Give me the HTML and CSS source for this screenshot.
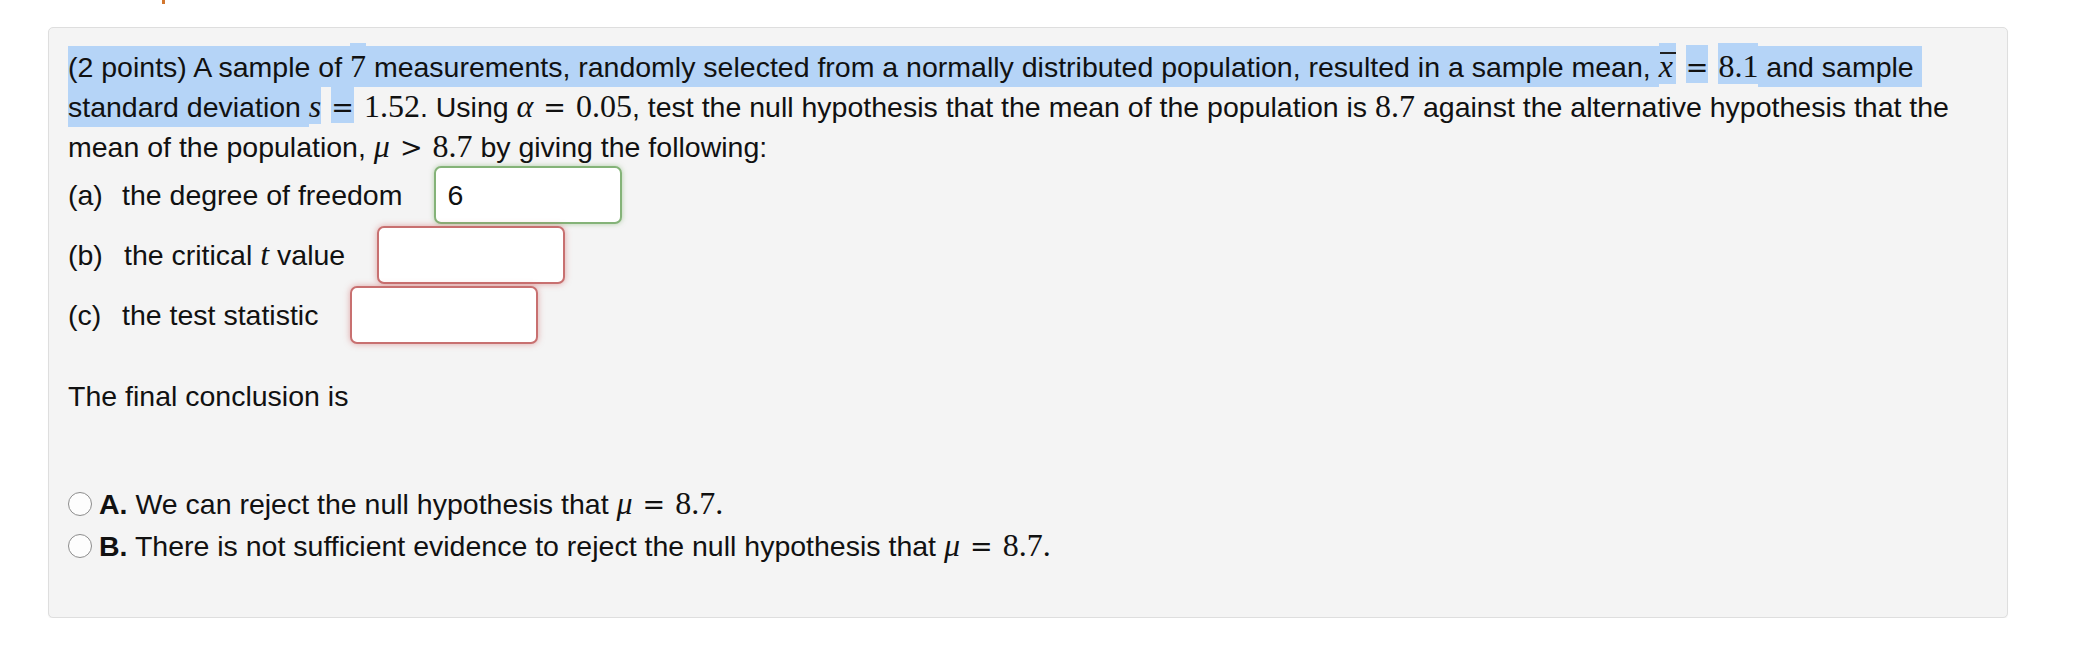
FILE: index.html
```html
<!DOCTYPE html>
<html lang="en">
<head>
<meta charset="utf-8">
<title>Problem</title>
<link rel="stylesheet" href="styles.css">
</head>
<body>
<div class="top"><span class="tick"></span></div>
<div class="panel">
  <p class="q"><span class="sel">(2 points) A sample of <span class="m sel-m">7</span> measurements, randomly selected from a normally distributed population, resulted in a sample mean, </span><span class="m mi xbar sel-m">x</span><span class="m rel sel-m">=</span><span class="m sel-m">8.1</span><span class="sel"> and sample&nbsp;</span><br><span class="sel">standard deviation </span><span class="m mi sel-m">s</span><span class="m rel sel-m">=</span><span class="m">1.52</span>. Using <span class="m mi">α</span><span class="m rel">=</span><span class="m">0.05</span>, test the null hypothesis that the mean of the population is <span class="m">8.7</span> against the alternative hypothesis that the<br>mean of the population, <span class="m mi">μ</span><span class="m rel">&gt;</span><span class="m">8.7</span> by giving the following:</p>
  <div class="parts">
    <div class="part"><span class="lbl">(a)</span><span class="txt">the degree of freedom</span><input class="ans ok" type="text" value="6"></div>
    <div class="part"><span class="lbl lbl-b">(b)</span><span class="txt">the critical <span class="m mi">t</span> value</span><input class="ans bad" type="text" value=""></div>
    <div class="part"><span class="lbl">(c)</span><span class="txt">the test statistic</span><input class="ans bad" type="text" value=""></div>
  </div>
  <p class="concl">The final conclusion is</p>
  <div class="opts">
    <label class="opt"><input class="radio" type="radio" name="c"><span><b>A.</b> We can reject the null hypothesis that <span class="m mi">μ</span><span class="m rel">=</span><span class="m">8.7.</span></span></label>
    <label class="opt"><input class="radio" type="radio" name="c"><span><b>B.</b> There is not sufficient evidence to reject the null hypothesis that <span class="m mi">μ</span><span class="m rel">=</span><span class="m">8.7.</span></span></label>
  </div>
</div>
</body>
</html>
```
FILE: styles.css
```css
* {
  box-sizing: border-box;
}

body {
  margin: 0;
  background: #ffffff;
  font-family: "Liberation Sans", Arial, sans-serif;
  color: #111111;
}

.top {
  height: 27px;
  padding-left: 162px;
}

.tick {
  display: block;
  width: 3px;
  height: 4px;
  background: #d2772f;
}

.panel {
  margin-left: 48px;
  width: 1960px;
  background: #f4f4f4;
  border: 1px solid #dedede;
  border-radius: 5px;
  box-shadow: 0 1px 1px rgba(0, 0, 0, 0.06);
  padding: 19px 19px 50px;
  font-size: 28.5px;
  line-height: 40px;
}

.q {
  margin: 0;
  white-space: nowrap;
}

.sel {
  background: #b5d4f7;
  padding: 5px 0 4px;
}

.m {
  font-family: "Liberation Serif", "Times New Roman", serif;
  font-size: 32px;
  line-height: 1;
}

.mi {
  font-style: italic;
}

.rel {
  font-family: "DejaVu Serif", "Liberation Serif", serif;
  font-size: 27px;
  margin: 0 10px;
}

.sel-m {
  background: #b5d4f7;
  padding-top: 5px;
}

.rel.sel-m {
  padding-top: 7px;
}

.xbar {
  position: relative;
  padding-right: 3px;
}

.xbar::before {
  content: "";
  position: absolute;
  left: 1px;
  right: 0;
  top: 9px;
  border-top: 2px solid #222;
}

.parts {
  display: flex;
  flex-direction: column;
  margin-top: -2px;
}

.part {
  display: flex;
  align-items: center;
  height: 60px;
}

.lbl {
  width: 54px;
}

.lbl-b {
  width: 56px;
}

.ans {
  width: 188px;
  height: 58px;
  margin: 0 0 0 32px;
  padding: 0 11px;
  border: 2px solid #b5b5b5;
  border-radius: 7px;
  background: #ffffff;
  font-family: "Liberation Sans", Arial, sans-serif;
  font-size: 28.5px;
  color: #111111;
  outline: none;
}

.ans.ok {
  border-color: #84b378;
  box-shadow: 0 0 5px rgba(110, 170, 90, 0.5);
}

.ans.bad {
  border-color: #c87070;
  box-shadow: 0 0 6px rgba(205, 90, 90, 0.5);
}

.concl {
  margin: 31px 0 0;
}

.opts {
  margin-top: 67px;
  display: flex;
  flex-direction: column;
}

.opt {
  display: flex;
  align-items: center;
  height: 42px;
  line-height: 42px;
}

.radio {
  appearance: none;
  -webkit-appearance: none;
  width: 24px;
  height: 24px;
  margin: 0 7px 0 0;
  border: 1.5px solid #8c8c8c;
  border-radius: 50%;
  background: #fdfdfd;
  flex: none;
}
```
